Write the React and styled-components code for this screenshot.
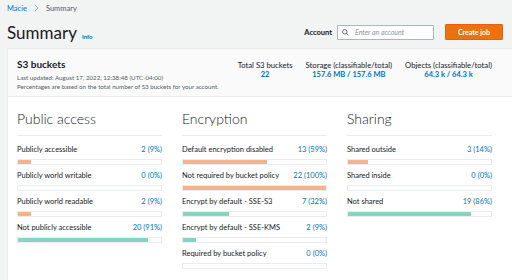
import styled, { createGlobalStyle } from 'styled-components';

const GlobalStyle = createGlobalStyle`
  html, body {
    margin: 0;
    padding: 0;
    background: #f2f3f3;
    font-family: Lato, 'Liberation Sans', sans-serif;
    color: #16191f;
  }
`;

const sections = [
  {
    title: 'Public access',
    rows: [
      { label: 'Publicly accessible', value: '2 (9%)', pct: 9, tone: 'bad' },
      { label: 'Publicly world writable', value: '0 (0%)', pct: 0, tone: 'bad' },
      { label: 'Publicly world readable', value: '2 (9%)', pct: 9, tone: 'bad' },
      { label: 'Not publicly accessible', value: '20 (91%)', pct: 91, tone: 'good' },
    ],
  },
  {
    title: 'Encryption',
    rows: [
      { label: 'Default encryption disabled', value: '13 (59%)', pct: 59, tone: 'bad' },
      { label: 'Not required by bucket policy', value: '22 (100%)', pct: 100, tone: 'bad' },
      { label: 'Encrypt by default - SSE-S3', value: '7 (32%)', pct: 32, tone: 'good' },
      { label: 'Encrypt by default - SSE-KMS', value: '2 (9%)', pct: 9, tone: 'good' },
      { label: 'Required by bucket policy', value: '0 (0%)', pct: 0, tone: 'good' },
    ],
  },
  {
    title: 'Sharing',
    rows: [
      { label: 'Shared outside', value: '3 (14%)', pct: 14, tone: 'bad' },
      { label: 'Shared inside', value: '0 (0%)', pct: 0, tone: 'bad' },
      { label: 'Not shared', value: '19 (86%)', pct: 86, tone: 'good' },
    ],
  },
];

const stats = [
  { label: 'Total S3 buckets', value: '22' },
  { label: 'Storage (classifiable/total)', value: '157.6 MB / 157.6 MB' },
  { label: 'Objects (classifiable/total)', value: '64.3 k / 64.3 k' },
];

export default function App() {
  return (
    <Page>
      <GlobalStyle />
      <Crumbs>
        <CrumbLink>Macie</CrumbLink>
        <Chevron viewBox="0 0 6 10">
          <path d="M1 1l4 4-4 4" fill="none" stroke="#879596" strokeWidth="1" />
        </Chevron>
        <span>Summary</span>
      </Crumbs>

      <TitleRow>
        <Title>
          Summary <Info>Info</Info>
        </Title>
        <Actions>
          <AccountLabel>Account</AccountLabel>
          <Search>
            <svg width="7" height="7" viewBox="0 0 10 10">
              <circle cx="4" cy="4" r="3.2" fill="none" stroke="#545b64" strokeWidth="1.3" />
              <path d="M6.4 6.4L9.2 9.2" stroke="#545b64" strokeWidth="1.3" />
            </svg>
            <Placeholder>Enter an account</Placeholder>
          </Search>
          <Divider />
          <CreateButton>Create job</CreateButton>
        </Actions>
      </TitleRow>

      <Card>
        <CardHeader>
          <HeaderText>
            <CardTitle>S3 buckets</CardTitle>
            <Meta>Last updated: August 17, 2022, 12:38:48 (UTC-04:00)</Meta>
            <Meta>Percentages are based on the total number of S3 buckets for your account.</Meta>
          </HeaderText>
          <Stats>
            {stats.map((s) => (
              <Stat key={s.label}>
                <StatLabel>{s.label}</StatLabel>
                <StatValue>{s.value}</StatValue>
              </Stat>
            ))}
          </Stats>
        </CardHeader>

        <Columns>
          {sections.map((sec) => (
            <Column key={sec.title}>
              <ColumnTitle>{sec.title}</ColumnTitle>
              {sec.rows.map((r) => (
                <Row key={r.label}>
                  <RowTop>
                    <span>{r.label}</span>
                    <RowValue>{r.value}</RowValue>
                  </RowTop>
                  <Track>
                    <Fill tone={r.tone} style={{ width: `${r.pct}%` }} />
                  </Track>
                </Row>
              ))}
            </Column>
          ))}
        </Columns>
      </Card>
    </Page>
  );
}

const Page = styled.div`
  width: 512px;
  height: 280px;
  overflow: hidden;
  padding-left: 7px;
  box-sizing: border-box;
`;

const Crumbs = styled.div`
  display: flex;
  align-items: center;
  gap: 7px;
  height: 14px;
  padding-top: 1px;
  font-size: 7.5px;
  color: #545b64;
`;

const CrumbLink = styled.span`
  color: #0073bb;
`;

const Chevron = styled.svg`
  width: 5px;
  height: 8px;
`;

const TitleRow = styled.div`
  display: flex;
  align-items: center;
  justify-content: space-between;
  height: 34px;
  padding-right: 9px;
`;

const Title = styled.h1`
  margin: 0;
  font-size: 17px;
  font-weight: 400;
  display: flex;
  align-items: baseline;
  gap: 5px;
`;

const Info = styled.span`
  font-size: 6px;
  font-weight: 700;
  color: #0073bb;
`;

const Actions = styled.div`
  display: flex;
  align-items: center;
`;

const AccountLabel = styled.span`
  font-size: 7.5px;
  font-weight: 700;
  margin-right: 5px;
`;

const Search = styled.div`
  display: flex;
  align-items: center;
  gap: 6px;
  width: 97px;
  height: 15px;
  box-sizing: border-box;
  padding-left: 4px;
  background: #fff;
  border: 1px solid #aab7b8;
  border-radius: 1px;
`;

const Placeholder = styled.span`
  font-size: 7px;
  font-style: italic;
  color: #879596;
`;

const Divider = styled.div`
  width: 1px;
  height: 13px;
  background: #eaeded;
  margin: 0 5px;
`;

const CreateButton = styled.button`
  width: 58px;
  height: 16px;
  border: 1px solid #eb5f07;
  border-radius: 1px;
  background: #ec7211;
  color: #fff;
  font-family: inherit;
  font-size: 7px;
  font-weight: 700;
  padding: 0;
`;

const Card = styled.div`
  margin-top: -1px;
  background: #fff;
  border: 1px solid #eaeded;
  border-right: 0;
  height: 240px;
  box-sizing: border-box;
`;

const CardHeader = styled.div`
  display: flex;
  justify-content: space-between;
  height: 48px;
  box-sizing: border-box;
  padding: 9px 20px 0 9px;
  background: #fafafa;
  border-bottom: 1px solid #eaeded;
`;

const HeaderText = styled.div`
  display: flex;
  flex-direction: column;
`;

const CardTitle = styled.div`
  font-size: 10px;
  font-weight: 700;
  margin-bottom: 3px;
`;

const Meta = styled.div`
  font-size: 6.2px;
  line-height: 9px;
  color: #545b64;
`;

const Stats = styled.div`
  display: flex;
  gap: 13px;
  padding-top: 2px;
`;

const Stat = styled.div`
  display: flex;
  flex-direction: column;
  align-items: center;
`;

const StatLabel = styled.span`
  font-size: 7.7px;
  line-height: 10px;
`;

const StatValue = styled.span`
  font-size: 7.5px;
  font-weight: 700;
  color: #0073bb;
`;

const Columns = styled.div`
  display: grid;
  grid-template-columns: repeat(3, 145px);
  column-gap: 20px;
  padding: 13px 0 0 9px;
`;

const Column = styled.div`
  display: flex;
  flex-direction: column;
`;

const ColumnTitle = styled.div`
  font-size: 14px;
  font-weight: 300;
  padding-bottom: 8px;
  border-bottom: 1px solid #eaeded;
  margin-bottom: 9px;
`;

const Row = styled.div`
  display: flex;
  flex-direction: column;
  gap: 5px;
  margin-bottom: 6px;
`;

const RowTop = styled.div`
  display: flex;
  justify-content: space-between;
  font-size: 7.5px;
  line-height: 9px;
`;

const RowValue = styled.span`
  color: #0073bb;
`;

const Track = styled.div`
  height: 4px;
  border: 1px solid #eaeded;
  box-sizing: content-box;
`;

const Fill = styled.div`
  height: 100%;
  background: ${(p) => (p.tone === 'good' ? '#88d3c1' : '#f4b38c')};
`;
